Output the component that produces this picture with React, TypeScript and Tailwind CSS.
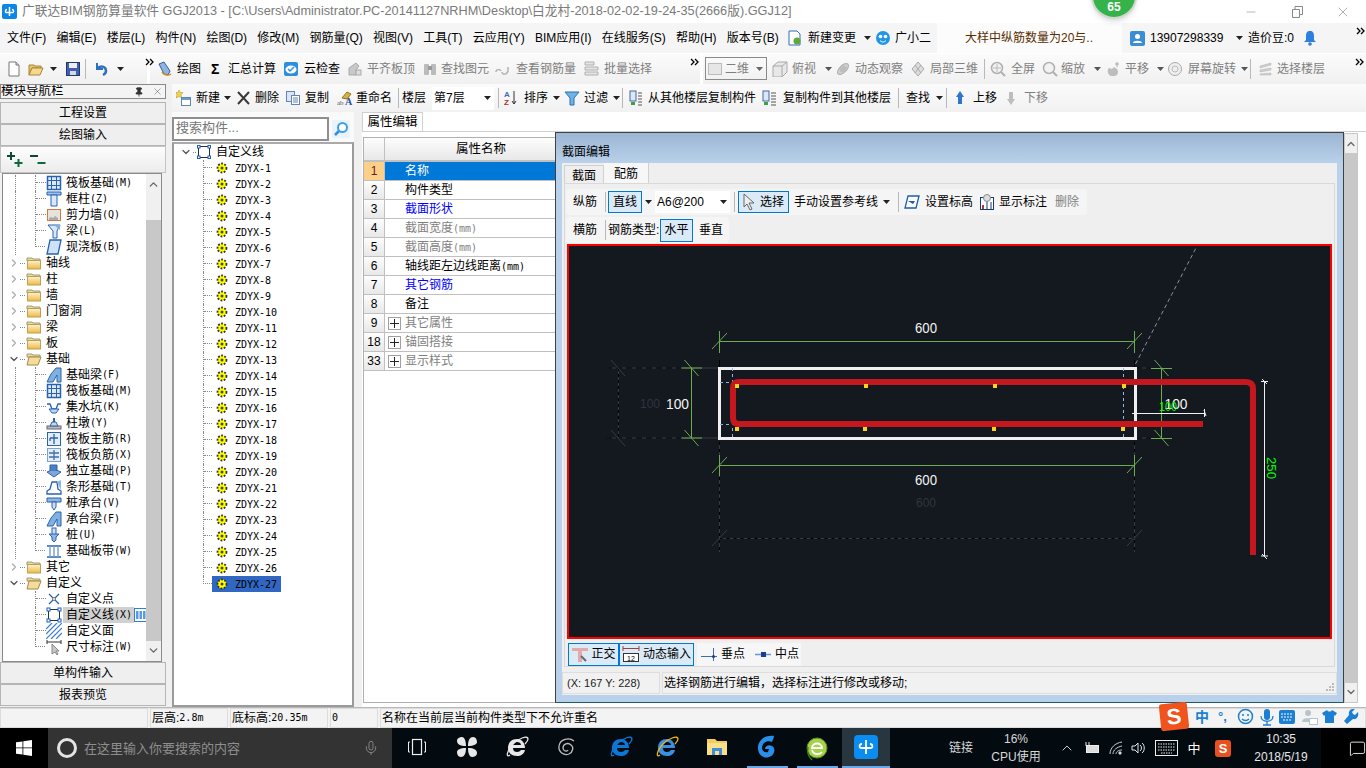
import React from "react";
import { Mic, ChevronUp, ChevronDown, ChevronRight, Pin, X as XIcon, Minus, MessageSquare } from "lucide-react";

const S = ({ w = 16, h = 16, children }: { w?: number; h?: number; children?: React.ReactNode }) => (
  <svg width={w} height={h} viewBox={`0 0 ${w} ${h}`} className="shrink-0">{children}</svg>
);

const Dd = ({ c = "#222" }: { c?: string }) => (
  <svg width="7" height="4" viewBox="0 0 7 4" className="shrink-0"><path d="M0 0h7L3.500 4z" fill={c} /></svg>
);
const More = () => (
  <svg width="10" height="8" viewBox="0 0 10 8" className="shrink-0 -translate-y-[7px]"><path d="M1 1l3 3-3 3M5 1l3 3-3 3" fill="none" stroke="#000" strokeWidth="1.300" /></svg>
);
const Sep = ({ cn }: { cn: string }) => (
  <div className={`h-[20px] shrink-0 ${cn}`}><div className="w-px h-full bg-[#b8b8b8]" /></div>
);

const Doc = () => <S><path d="M3 1h7l3 3v11H3z" fill="#fff" stroke="#777" /><path d="M10 1v3h3" fill="#ddd" stroke="#777" /></S>;
const Folder = () => <S><path d="M1 4h5l1 1h6v2H4l-3 7z" fill="#e8c56a" stroke="#a8863a" /><path d="M4 7h11l-3 7H1z" fill="#f6d88a" stroke="#a8863a" /></S>;
const Save = () => <S><rect x="1.500" y="1.500" width="13" height="13" fill="#3f5fb5" stroke="#24386e" /><rect x="4" y="2" width="8" height="5" fill="#eee" /><rect x="5" y="10" width="6" height="4" fill="#d8d8d8" /></S>;
const Undo = () => <S><path d="M3 2v6h6" fill="none" stroke="#2d6fc0" strokeWidth="2" /><path d="M3 8c3-4 9-3 9 2 0 2-1 3-3 4" fill="none" stroke="#2d6fc0" strokeWidth="2.500" /></S>;
const Draw = () => <S><path d="M2 3l5-2 6 9-2 4-4-1z" fill="#8fb4e0" stroke="#33609c" /><path d="M5 11c2 3 6 4 9 2" fill="none" stroke="#c09020" strokeWidth="1.500" /></S>;
const Cloud = () => <S><rect x="1" y="1" width="14" height="14" rx="2" fill="#2b8ee0" /><ellipse cx="8" cy="8.500" rx="5.500" ry="4" fill="#fff" /><path d="M5 8l2 2 4-4" fill="none" stroke="#2b8ee0" strokeWidth="1.500" /></S>;
const GrayA = () => <S><path d="M2 14V7l7-5 3 3-3 4v5z" fill="#c8c8c8" stroke="#aaa" /><rect x="9" y="9" width="5" height="5" fill="#ddd" stroke="#aaa" /></S>;
const Bino = () => <S><rect x="2" y="3" width="5" height="11" rx="1" fill="#bbb" /><rect x="9" y="3" width="5" height="11" rx="1" fill="#bbb" /><rect x="6" y="5" width="4" height="4" fill="#999" /></S>;
const Rebar = () => <S><path d="M1 11c0-3 4-3 5-1M7 11c0 3 5 3 6-1V6" fill="none" stroke="#b4b4b4" strokeWidth="1.500" /></S>;
const Batch = () => <S><path d="M1 1h9v3H1zM1 6h13v3H1zM1 11h13v3H1z" fill="#e4e4e4" stroke="#b0b0b0" /></S>;
const Cube = () => <S w={18}><path d="M2 5l5-4h9v10l-5 5H2z" fill="#e8e8e8" stroke="#aaa" /><path d="M2 5h9v11M11 5l5-4" fill="none" stroke="#aaa" /></S>;
const Orbit = () => <S><ellipse cx="8" cy="8" rx="7" ry="3.500" transform="rotate(-45 8 8)" fill="#cfcfcf" stroke="#b0b0b0" /><circle cx="8" cy="8" r="3.500" fill="#bdbdbd" /></S>;
const Local3 = () => <S><path d="M8 1l6 7-6 7-6-7z" fill="#ddd" stroke="#aaa" /><path d="M5 4l6 8M11 4l-6 8" stroke="#aaa" /></S>;
const ZoomG = ({ plus = true }: { plus?: boolean }) => <S><circle cx="7" cy="7" r="5.500" fill="#f2f2f2" stroke="#b0b0b0" strokeWidth="1.500" /><path d="M11 11l4 4" stroke="#b0b0b0" strokeWidth="2" />{plus && <path d="M7 3v8M3 7h8" stroke="#bbb" />}</S>;
const Pan = () => <S><path d="M6 15c-4-2-4-6-2-8l3 1 2-2 3 2c2 3 1 6-2 7z" fill="#bdbdbd" /><path d="M12 1v5M10 3h4" stroke="#aaa" /></S>;
const Rot = () => <S><circle cx="8" cy="8" r="6.500" fill="#eee" stroke="#aaa" /><circle cx="8" cy="8" r="3" fill="none" stroke="#bbb" /></S>;
const Layers = () => <S><path d="M2 5l11-3v2L2 7zM2 9l11-2v2L2 11zM2 13l11-1v2H2z" fill="#cfcfcf" stroke="#b0b0b0" strokeWidth=".5" /></S>;

const NewA = () => <S><path d="M3 0l1.500 2.500H7L5 5l1 3-3-1.500L0 8l1-3-1-2.500h2z" fill="#f3d24a" stroke="#b0902a" strokeWidth=".5" /><rect x="5.500" y="7.500" width="9" height="8" fill="#fff" stroke="#5b86b8" /><rect x="6" y="8" width="8" height="2" fill="#6c9bd0" /></S>;
const Del = () => <S><path d="M2 2l11 12M13 2L2 14" stroke="#3a3a3a" strokeWidth="2" /></S>;
const Cp = () => <S><rect x="1.500" y="1.500" width="8" height="10" fill="#dbe7f6" stroke="#6185b5" /><rect x="6.500" y="5.500" width="8" height="9" fill="#fff" stroke="#6185b5" /><path d="M8 8h5M8 10h5M8 12h5" stroke="#6185b5" /></S>;
const Ren = () => <S><path d="M5 8l5-6 4 2-4 5z" fill="#d9b13f" stroke="#8c7225" /><text x="0" y="15" fontSize="7" fill="#555" fontFamily="Liberation Serif">ab</text><text x="8" y="15" fontSize="10" fontWeight="700" fill="#2a4f9c" fontFamily="Liberation Serif">A</text></S>;
const Sort = () => <S w={13}><text x="0" y="7" fontSize="8" fontWeight="700" fill="#3b6fb8" fontFamily="Liberation Sans">A</text><text x="0" y="15" fontSize="8" fontWeight="700" fill="#b03030" fontFamily="Liberation Sans">Z</text><path d="M10 1v13M8 11l2 3 2-3" fill="none" stroke="#333" /></S>;
const Filter = () => <S><path d="M1 2h14L10 8v7H6V8z" fill="#6fb2e6" stroke="#2d6fb0" /></S>;
const CopyF = () => <S w={13}><rect x="1" y="1" width="6" height="10" fill="#dbe7f6" stroke="#4469a0" /><path d="M9 3h4M9 6h4M9 9h4M9 12h4M9 15h4" stroke="#555" /><path d="M2 12h4v3H2z" fill="#3aa04a" /></S>;
const Up = () => <S w={10}><path d="M5 1l4 6H7v7H3V7H1z" fill="#2f75c9" /></S>;
const Down = () => <S w={10}><path d="M5 15l4-6H7V2H3v7H1z" fill="#bdbdbd" /></S>;

const Tool = ({ i, t, cn, dis, g = "gap-[4px]" }: { i?: React.ReactNode; t: string; cn: string; dis?: boolean; g?: string }) => (
  <div className={`flex items-center shrink-0 whitespace-nowrap ${g} ${cn} ${dis ? "text-[#7f7f7f]" : "text-black"}`}>
    {i}
    <span>{t}</span>
  </div>
);
const DdBox = ({ cn, c }: { cn: string; c?: string }) => <div className={`flex items-center shrink-0 ${cn}`}><Dd c={c} /></div>;

const menus = ["文件(F)", "编辑(E)", "楼层(L)", "构件(N)", "绘图(D)", "修改(M)", "钢筋量(Q)", "视图(V)", "工具(T)", "云应用(Y)", "BIM应用(I)", "在线服务(S)", "帮助(H)", "版本号(B)"];

const Blue = "#2a62b0";
const treeIcons: Record<string, React.ReactNode> = {
  grid: <S><rect x="1.500" y="1.500" width="13" height="13" fill="#dce9f8" stroke={Blue} strokeWidth="1.500" /><path d="M5.500 1v14M10.500 1v14M1 5.500h14M1 10.500h14" stroke={Blue} /></S>,
  col: <S><path d="M1 1h14v3H1z" fill="#9cc4ec" stroke={Blue} /><path d="M5 4h6v11H5z" fill="#d9e9f9" stroke={Blue} /></S>,
  wall: <S><rect x="1.500" y="2.500" width="13" height="11" fill="#e7e2dc" stroke="#d07a40" /><path d="M3 11l2-1 2 1 2-2 3 2v2H3z" fill="#aaa" /></S>,
  beam: <S><path d="M2 2h12l-3 6v7H7V8z" fill="#d9e9f9" stroke={Blue} /><path d="M8 2l6 5V2z" fill="#7fb0e0" /></S>,
  slab: <S><path d="M4 1h11l-3 14H1z" fill="#cfe3f8" stroke={Blue} strokeWidth="1.300" /></S>,
  fbeam: <S><path d="M1 15l4-8 5-6h5v14h-4V8l-4 7z" fill="#7fb0e0" stroke={Blue} /></S>,
  pit: <S><path d="M1 5h3l2 5h4l2-5h3" fill="none" stroke={Blue} strokeWidth="1.300" /><path d="M3 10l3 4h4l3-4z" fill="#bcd6f0" stroke={Blue} /></S>,
  dun: <S><rect x="1" y="11" width="14" height="3" fill="#bbb" stroke="#667" /><path d="M4 11l2-4h4l2 4z" fill="#c8d4e4" stroke={Blue} /><rect x="7" y="3" width="2" height="4" fill={Blue} /></S>,
  main: <S><rect x="1.500" y="1.500" width="13" height="13" fill="#e3eefa" stroke={Blue} /><path d="M8 3v10M4 7h8M4 7v3" fill="none" stroke={Blue} strokeWidth="1.300" /></S>,
  neg: <S><rect x="1.500" y="1.500" width="13" height="13" fill="#e3eefa" stroke="#7aa3d0" /><path d="M3 6h10M3 10h10M8 3v10" stroke="#446ea8" strokeWidth="1.300" /></S>,
  iso: <S><path d="M1 9l7-3 7 3-7 5z" fill="#7ea7d8" stroke={Blue} /><path d="M4 8V2h7v6" fill="#4d7fbe" stroke={Blue} /></S>,
  strip: <S><path d="M1 15v-3l3-2 2-7h5l1 7 3 2v3z" fill="#fff" stroke={Blue} strokeWidth="1.300" /><path d="M11 3l4-2v10z" fill="#8db7e2" /></S>,
  cap: <S><path d="M1 3h14v4H1z" fill="#8db7e2" stroke={Blue} /><path d="M6 7h4v5l-2 3-2-3z" fill="#cfe0f4" stroke={Blue} /></S>,
  pile: <S><rect x="6" y="1" width="4" height="8" fill="#cfe0f4" stroke={Blue} /><path d="M3 7h10l-3 3v3l-2 2-2-2v-3z" fill="#8db7e2" stroke={Blue} /></S>,
  band: <S><path d="M1 3h14M1 14h14" stroke={Blue} strokeWidth="1.500" /><path d="M4 3v11M8 3v11M12 3v11" stroke="#7aa3d0" strokeWidth="1.500" /></S>,
  pt: <S><path d="M3 3l10 10M13 3L3 13" stroke={Blue} strokeWidth="1.300" /><circle cx="8" cy="8" r="1.500" fill="#fff" stroke="#777" /></S>,
  line: <S><rect x="2.500" y="2.500" width="11" height="11" fill="none" stroke="#234" /><g fill="#fff" stroke="#1f5fc0"><rect x="1" y="1" width="3" height="3" /><rect x="12" y="1" width="3" height="3" /><rect x="1" y="12" width="3" height="3" /><rect x="12" y="12" width="3" height="3" /></g></S>,
  hatch: <S><path d="M0 6l6-6M0 11L11 0M0 16L16 0M5 16L16 5M10 16l6-6" stroke="#3a7ad0" strokeWidth="1.200" /></S>,
  dim: <S><path d="M1 1v4M15 1v4M1 3h14" stroke="#333" /><path d="M6 5v10l3-2 2 3 1-1-2-3h3z" fill="#c8c8c8" stroke="#888" /></S>,
};

const FolderT = ({ open }: { open?: boolean }) => (
  <S>
    <path d="M1 3h5l1 1h7v2H1z" fill="#e6d9a8" stroke="#a89a70" />
    {open ? <path d="M3 6h12l-3 8H1z" fill="#f5dd99" stroke="#a38a45" /> : <rect x="1.500" y="5.500" width="13" height="8.500" fill="url(#fg)" stroke="#b9a060" />}
  </S>
);

type Row = { l: 1 | 2; t: string; s?: string; i?: string; open?: boolean; closed?: boolean; outer?: boolean; sel?: boolean; last?: boolean };
const rows: Row[] = [
  { l: 2, outer: true, t: "筏板基础", s: "(M)", i: "grid" },
  { l: 2, outer: true, t: "框柱", s: "(Z)", i: "col" },
  { l: 2, outer: true, t: "剪力墙", s: "(Q)", i: "wall" },
  { l: 2, outer: true, t: "梁", s: "(L)", i: "beam" },
  { l: 2, outer: true, t: "现浇板", s: "(B)", i: "slab", last: true },
  { l: 1, t: "轴线", closed: true },
  { l: 1, t: "柱", closed: true },
  { l: 1, t: "墙", closed: true },
  { l: 1, t: "门窗洞", closed: true },
  { l: 1, t: "梁", closed: true },
  { l: 1, t: "板", closed: true },
  { l: 1, t: "基础", open: true },
  { l: 2, outer: true, t: "基础梁", s: "(F)", i: "fbeam" },
  { l: 2, outer: true, t: "筏板基础", s: "(M)", i: "grid" },
  { l: 2, outer: true, t: "集水坑", s: "(K)", i: "pit" },
  { l: 2, outer: true, t: "柱墩", s: "(Y)", i: "dun" },
  { l: 2, outer: true, t: "筏板主筋", s: "(R)", i: "main" },
  { l: 2, outer: true, t: "筏板负筋", s: "(X)", i: "neg" },
  { l: 2, outer: true, t: "独立基础", s: "(P)", i: "iso" },
  { l: 2, outer: true, t: "条形基础", s: "(T)", i: "strip" },
  { l: 2, outer: true, t: "桩承台", s: "(V)", i: "cap" },
  { l: 2, outer: true, t: "承台梁", s: "(F)", i: "fbeam" },
  { l: 2, outer: true, t: "桩", s: "(U)", i: "pile" },
  { l: 2, outer: true, t: "基础板带", s: "(W)", i: "band", last: true },
  { l: 1, t: "其它", closed: true },
  { l: 1, t: "自定义", open: true },
  { l: 2, t: "自定义点", i: "pt" },
  { l: 2, t: "自定义线", s: "(X)", i: "line", sel: true },
  { l: 2, t: "自定义面", i: "hatch" },
  { l: 2, t: "尺寸标注", s: "(W)", i: "dim", last: true },
];

const Mono = ({ t }: { t: string }) => <span className="font-['DejaVu_Sans_Mono',monospace] text-[10px]">{t}</span>;

const NavRow = ({ r }: { r: Row }) => {
  if (r.l === 1) {
    return (
      <div className="flex items-center h-4 shrink-0 pl-[5px]">
        <div className="w-[12px] flex justify-center shrink-0">
          {r.open ? <ChevronDown size={12} color="#555" strokeWidth={2.500} /> : <ChevronRight size={12} color="#aaa" strokeWidth={2.500} />}
        </div>
        <div className="w-[5px] border-b border-dotted border-[#888] shrink-0 mr-[1px]" />
        <FolderT open={r.open} />
        <span className="ml-[4px]">{r.t}</span>
      </div>
    );
  }
  return (
    <div className="flex h-4 shrink-0 items-center">
      <div className="w-[12px] shrink-0" />
      <div className={`w-px h-full shrink-0 ${r.outer ? "border-l border-dotted border-[#888]" : ""}`} />
      <div className="w-[19px] shrink-0" />
      <div className={`w-[10px] shrink-0 border-l border-dotted border-[#888] ${r.last ? "h-1/2 self-start border-b" : "h-full"}`}>
        {!r.last && <div className="w-[10px] mt-[7px] border-b border-dotted border-[#888]" />}
      </div>
      <div className="w-[1px] shrink-0" />
      {treeIcons[r.i!]}
      <div className={`ml-[1px] pl-[3px] pr-[2px] h-full flex items-center whitespace-nowrap shrink-0 ${r.sel ? "bg-[#d0d0d0]" : ""}`}>
        {r.t}{r.s && <Mono t={r.s} />}
      </div>
      {r.sel && (
        <svg width="13" height="14" viewBox="0 0 13 14" className="shrink-0"><rect x=".5" y=".5" width="12" height="13" fill="#fff" stroke="#2b7fd8" /><path d="M2 3h2.500v8H2zM5.500 3H8v8H5.500zM9 3h2.500v8H9z" fill="#5a9ae0" /></svg>
      )}
    </div>
  );
};

const Gear = () => (
  <S w={12} h={12}>
    <circle cx="6" cy="6" r="4.500" fill="#ffff00" stroke="#333" strokeWidth="1.800" strokeDasharray="1.800 1.500" />
    <circle cx="6" cy="6" r="1.500" fill="#444" />
  </S>
);

const props = [
  { n: "1", t: "名称", c: "text-white", act: true },
  { n: "2", t: "构件类型", c: "text-black" },
  { n: "3", t: "截面形状", c: "text-[#0000ff]" },
  { n: "4", t: "截面宽度", s: "(mm)", c: "text-[#7f7f7f]" },
  { n: "5", t: "截面高度", s: "(mm)", c: "text-[#7f7f7f]" },
  { n: "6", t: "轴线距左边线距离", s: "(mm)", c: "text-black" },
  { n: "7", t: "其它钢筋", c: "text-[#0000ff]" },
  { n: "8", t: "备注", c: "text-black" },
  { n: "9", t: "其它属性", c: "text-[#7f7f7f]", plus: true },
  { n: "18", t: "锚固搭接", c: "text-[#7f7f7f]", plus: true },
  { n: "33", t: "显示样式", c: "text-[#7f7f7f]", plus: true },
];

const Tick = ({ x, y, c }: { x: number; y: number; c: string }) => (
  <path d={`M${x - 7.500} ${y + 8}L${x + 7.500} ${y - 8}`} stroke={c} fill="none" />
);
const TickB = ({ x, y, c }: { x: number; y: number; c: string }) => (
  <path d={`M${x - 7} ${y - 8}L${x + 7} ${y + 8}`} stroke={c} fill="none" />
);

const Num = ({ x, y, t, c, w = 22, fs = 15 }: { x: number; y: number; t: string; c: string; w?: number; fs?: number }) => (
  <text x={x} y={y} textAnchor="middle" fill={c} fontSize={fs} fontFamily="Liberation Sans" textLength={w} lengthAdjust="spacingAndGlyphs">{t}</text>
);

const Drawing = () => {
  const g = "#6dab52";
  const d = "#343b47";
  return (
    <svg width="761" height="391" viewBox="569 246 761 391" className="block">
      <path d="M606 368H719M606 438H719M1135 368H1150M1135 438H1150" stroke={d} />
      <path d="M606 368H681M606 438H681M1136 368H1150M1136 438H1150" stroke="#000" strokeDasharray="6 4" />
      <path d="M618.500 368V438" stroke={d} />
      <path d="M618.500 368V438" stroke="#000" strokeDasharray="3 3" />
      <TickB x={618} y={368} c={d} />
      <TickB x={618} y={438} c={d} />
      <path d="M719.500 442V552M1134.500 442V552M719.500 538.500H1134.500" stroke={d} />
      <path d="M719.500 442V552M1134.500 442V552M719.500 538.500H1134.500" stroke="#000" strokeDasharray="3 4" />
      <Tick x={719.500} y={538} c={d} />
      <Tick x={1134.500} y={538} c={d} />
      <path d="M719.500 360V367M1134.500 360V367" stroke="#000" />
      <path d="M1135.500 364L1197 246" stroke="#8a8f98" strokeDasharray="4 3" fill="none" />
      <path d="M719.500 341.500H1134.500M719.500 331V353M1134.500 331V353" stroke={g} />
      <Tick x={719.500} y={341} c={g} />
      <Tick x={1134.500} y={341} c={g} />
      <path d="M719.500 465.500H1134.500M719.500 455V476M1134.500 455V476" stroke={g} />
      <Tick x={719.500} y={465} c={g} />
      <Tick x={1134.500} y={465} c={g} />
      <path d="M681.500 368H702M681.500 438H702M691.500 368V438" stroke={g} />
      <TickB x={691.500} y={368} c={g} />
      <TickB x={691.500} y={438} c={g} />
      <path d="M1151 368.500H1172M1151 438.500H1172M1161.500 368V438" stroke={g} />
      <TickB x={1161.500} y={368} c={g} />
      <TickB x={1161.500} y={438} c={g} />
      <rect x="719.500" y="368.500" width="416" height="70" fill="none" stroke="#f0f0f0" strokeWidth="3" />
      <path d="M732.500 368V438M1123.500 368V438M720 382.500H733M720 424.500H733" stroke="#8fb8e4" strokeDasharray="3 3" />
      <path d="M1203 424H739Q733 424 733 418V388Q733 382 739 382H1246Q1253 382 1253 389V555" fill="none" stroke="#c4181e" strokeWidth="6" />
      <g fill="#ffd21f">
        <rect x="735" y="384" width="4" height="4" />
        <rect x="864" y="384" width="4" height="4" />
        <rect x="993" y="384" width="4" height="4" />
        <rect x="1122" y="384" width="4" height="4" />
        <rect x="735" y="427" width="4" height="4" />
        <rect x="863" y="427" width="4" height="4" />
        <rect x="992" y="427" width="4" height="4" />
        <rect x="1121" y="427" width="4" height="4" />
      </g>
      <path d="M1132 413.500H1205M1204 410L1206 416M1204.500 409V417" stroke="#f0f0f0" fill="none" />
      <path d="M1264.500 381.500V556M1261 381.500H1268M1261 556H1268M1262 379L1267 384M1262 554L1267 559" stroke="#f0f0f0" fill="none" />
      <Num x={926} y={333} t="600" c="#f5f5f5" />
      <Num x={926} y={485} t="600" c="#f5f5f5" />
      <Num x={926} y={507} t="600" c="#2f3540" w={20} fs={13} />
      <Num x={677.500} y={409} t="100" c="#f5f5f5" w={23} />
      <Num x={650} y={408} t="100" c="#2f3540" w={20} fs={13} />
      <Num x={1176} y={409} t="100" c="#f5f5f5" w={23} />
      <Num x={1168} y={411} t="100" c="#00ff00" w={18} fs={12} />
      <text x="1266" y="468" transform="rotate(90 1266 468)" textAnchor="middle" fill="#00ff00" fontSize="12" fontFamily="Liberation Sans" textLength="22" lengthAdjust="spacingAndGlyphs" dy="-1">250</text>
    </svg>
  );
};

const Btn = ({ cn, children }: { cn: string; children: React.ReactNode }) => (
  <div className={`flex items-center justify-center shrink-0 border border-[#0078d7] bg-[#dbeaf7] ${cn}`}>{children}</div>
);

const Dialog = () => (
  <div className="absolute left-[555px] top-[132px] w-[789px] h-[571px] border border-[#404040] border-b-[#1c5f6a] flex flex-col bg-[#b9d1ea] z-10">
    <div className="h-[30px] shrink-0 pl-[6px] pt-[12px] leading-[14px] text-black bg-gradient-to-b from-[#9bb5d3] to-[#b9d1ea]">截面编辑</div>
    <div className="mx-[6px] h-[532px] bg-[#efefef] flex flex-col shrink-0">
      <div className="h-[20px] shrink-0 flex items-end pl-[2px]">
        <div className="w-[40px] h-[18px] border border-b-0 border-[#d0d0d0] flex items-center justify-center pt-[2px]">截面</div>
        <div className="w-[45px] h-[20px] bg-[#f7f7f7] border-r border-[#d0d0d0] flex items-center justify-center pt-[2px]">配筋</div>
      </div>
      <div className="mx-[2px] h-[484px] border border-[#d9d9d9] flex flex-col shrink-0">
        <div className="h-[5px] shrink-0" />
        <div className="h-[26px] w-[521px] ml-[1px] shrink-0 flex items-center bg-[#f5f5f5] rounded-sm">
          <Tool t="纵筋" cn="ml-[7px] w-[32px]" />
          <Sep cn="w-[3px]" />
          <Btn cn="w-[34px] h-[22px]">直线</Btn>
          <DdBox cn="w-[13px] justify-center" />
          <div className="w-[75px] h-[22px] bg-white flex items-center justify-between shrink-0 pl-[2px] pr-[3px] text-[12px]"><span>A6@200</span><Dd /></div>
          <Sep cn="w-[4px] ml-[4px]" />
          <Btn cn="w-[51px] h-[22px] gap-[5px]">
            <svg width="12" height="18" viewBox="0 0 12 18"><path d="M1 1v13l3-3 3 6 2-1-3-6h5z" fill="#eee" stroke="#666" /></svg>
            <span>选择</span>
          </Btn>
          <Tool t="手动设置参考线" cn="ml-[5px] w-[89px]" />
          <DdBox cn="w-[15px]" />
          <Sep cn="w-[6px]" />
          <Tool cn="w-[76px]" g="gap-[5px]" t="设置标高" i={<S><path d="M4 2h11l-3 12H1z" fill="#fff" stroke="#1c5fa8" strokeWidth="1.300" /><path d="M4 7h7l-2 3z" fill="#1c5fa8" /></S>} />
          <Tool cn="w-[75px]" g="gap-[5px]" t="显示标注" i={<S w={14}><rect x=".5" y="3.500" width="13" height="12" fill="#fff" stroke="#163d72" /><circle cx="7" cy="4" r="3.500" fill="#ddd" stroke="#888" /><rect x="2" y="11" width="2" height="4" fill="#c03030" /><path d="M7 8v7M11 8v7" stroke="#163d72" /></S>} />
          <Tool t="删除" cn="" dis />
        </div>
        <div className="h-[2px] shrink-0" />
        <div className="h-[26px] w-[163px] ml-[1px] shrink-0 flex items-center bg-[#f5f5f5] rounded-sm">
          <Tool t="横筋" cn="ml-[7px] w-[32px]" />
          <Sep cn="w-[3px]" />
          <Tool t="钢筋类型:" cn="w-[52px]" />
          <Btn cn="w-[33px] h-[23px]">水平</Btn>
          <Tool t="垂直" cn="ml-[6px]" />
        </div>
        <div className="h-px shrink-0" />
        <div className="ml-[2px] w-[765px] h-[395px] border-2 border-[#ff0000] bg-[#14181f] shrink-0 overflow-hidden">
          <Drawing />
        </div>
        <div className="h-[3px] shrink-0" />
        <div className="h-[24px] shrink-0 flex items-center ml-[3px]">
          <Btn cn="w-[51px] h-[23px] gap-[2px]">
            <S w={18} h={18}><path d="M1 3h16v3h-6v11H7V6H1z" fill="#e4a9a9" /><path d="M10 11l5 5" stroke="#667" strokeWidth="2" /></S>
            <span>正交</span>
          </Btn>
          <Btn cn="w-[75px] h-[23px] gap-[3px]">
            <S w={18} h={18}><path d="M1 1v5M17 1v5M1 3.500h16" stroke="#a04040" /><rect x="1.500" y="8.500" width="15" height="8" fill="#fff" stroke="#333" /><text x="5" y="15.500" fontSize="7" fontFamily="Liberation Sans">12</text></S>
            <span>动态输入</span>
          </Btn>
          <div className="ml-[3px] w-[104px] h-[23px] bg-[#f6f6f6] flex items-center shrink-0 pl-[4px]">
            <Tool cn="w-[54px]" g="gap-[3px]" t="垂点" i={<S w={17}><path d="M0 10.500h16M12.500 2v13" stroke="#3a6fb5" /><circle cx="12.500" cy="10.500" r="1.500" fill="#1c3d7a" /></S>} />
            <Tool cn="" g="gap-[3px]" t="中点" i={<S w={17}><path d="M0 8.500h16" stroke="#6a94cc" strokeWidth="1.500" /><rect x="6" y="6" width="5" height="5" fill="#1c3d90" /></S>} />
          </div>
        </div>
      </div>
      <div className="h-[5px] shrink-0" />
      <div className="h-[22px] shrink-0 flex gap-[2px]">
        <div className="w-[98px] bg-[#f1f1f1] border border-[#dedede] flex items-center pl-[4px] text-[11px] text-[#222]">(X: 167 Y: 228)</div>
        <div className="flex-1 bg-[#f1f1f1] border border-[#dedede] flex items-center pl-[1px] relative">
          选择钢筋进行编辑，选择标注进行修改或移动;
          <svg width="10" height="10" viewBox="0 0 10 10" className="absolute right-[1px] bottom-[1px]"><g fill="#bbb"><rect x="7" y="1" width="2" height="2" /><rect x="4" y="4" width="2" height="2" /><rect x="7" y="4" width="2" height="2" /><rect x="1" y="7" width="2" height="2" /><rect x="4" y="7" width="2" height="2" /><rect x="7" y="7" width="2" height="2" /></g></svg>
        </div>
      </div>
    </div>
  </div>
);

const TaskSlot = ({ cn, children, line }: { cn: string; children: React.ReactNode; line?: boolean }) => (
  <div className={`h-full flex flex-col items-center justify-between shrink-0 ${cn}`}>
    <div className="flex-1 flex items-center justify-center">{children}</div>
    <div className={`h-[2px] w-[41px] ${line ? "bg-[#6aa7e8]" : ""}`} />
  </div>
);

const Ie = ({ c = "#e8e8e8", ring = "#e8e8e8" }: { c?: string; ring?: string }) => (
  <svg width="24" height="24" viewBox="0 0 24 24">
    <path d="M3 13c0-6 4-9 9-9s8 4 8 9H8c0 3 2 4 4 4 2 0 3-1 4-2h4c-1 4-4 6-8 6-5 0-9-3-9-8zM8 10h8c0-2-2-3-4-3s-4 1-4 3z" fill={c} />
    <path d="M5 20C1 23 1 17 8 9c6-6 15-9 15-5 0 2-2 4-3 5" fill="none" stroke={ring} strokeWidth="1.300" />
  </svg>
);

export default function App() {
  return (
    <div className="relative w-[1366px] h-[768px] overflow-hidden flex flex-col bg-[#f5f5f5] text-[12px] leading-none text-black font-['Liberation_Sans','Noto_Sans_CJK_SC',sans-serif]">
      <svg width="0" height="0" className="absolute"><defs><linearGradient id="fg" x1="0" y1="0" x2="0" y2="1"><stop offset="0" stopColor="#fdf3cf" /><stop offset="1" stopColor="#eeb93e" /></linearGradient></defs></svg>

      <div className="h-[23px] shrink-0 bg-white flex items-center text-[#7a7a7a] relative">
        <div className="ml-[2px] w-[15px] h-[15px] rounded-[2px] bg-[#0b86e6] flex items-center justify-center shrink-0">
          <svg width="11" height="11" viewBox="0 0 11 11"><path d="M5.500 1v9M1.500 6.500h8M3 3.500c-2 0-2 3-.5 3M8 3.500c2 0 2 3 .5 3" fill="none" stroke="#fff" strokeWidth="1.500" /></svg>
        </div>
        <span className="ml-[5px] text-[12.730px] whitespace-nowrap">广联达BIM钢筋算量软件 GGJ2013 - [C:\Users\Administrator.PC-20141127NRHM\Desktop\白龙村-2018-02-02-19-24-35(2666版).GGJ12]</span>
        <div className="ml-auto flex items-center shrink-0">
          <div className="w-[46px] flex justify-center"><Minus size={14} color="#888" strokeWidth={1} /></div>
          <div className="w-[46px] flex justify-center">
            <svg width="11" height="12" viewBox="0 0 11 12"><path d="M.5 3.500h7v8h-7zM3 3.500V.5h7.500v8H7.500" fill="none" stroke="#888" /></svg>
          </div>
          <div className="w-[46px] flex justify-center"><XIcon size={16} color="#888" strokeWidth={1} /></div>
        </div>
      </div>

      <div className="h-[30px] shrink-0 flex items-center bg-[#f5f5f5]">
        <div className="w-[787px] pl-[7px] flex gap-[10.200px] shrink-0 whitespace-nowrap">
          {menus.map((m) => <span key={m}>{m}</span>)}
        </div>
        <Tool cn="w-[77px]" g="gap-[5px]" t="新建变更" i={<S><path d="M2 1h8l3 3v11H2z" fill="#fff" stroke="#2e6fc0" /><circle cx="10" cy="11" r="3.500" fill="#62a838" /></S>} />
        <DdBox cn="w-[11px]" />
        <Tool cn="w-[62px]" g="gap-[4px]" t="广小二" i={
          <S><ellipse cx="8" cy="8" rx="7" ry="7" fill="#2196e8" /><circle cx="5.500" cy="6.500" r="1.800" fill="#fff" /><circle cx="10.500" cy="6.500" r="1.800" fill="#fff" /><path d="M5 10.500c2 2 4 2 6 0" fill="none" stroke="#fff" /></S>
        } />
        <div className="w-[185px] h-full bg-[#fcfcfc] flex items-center pl-[28px] text-[#5a2d00] shrink-0 whitespace-nowrap">大样中纵筋数量为20与..</div>
        <div className="w-[8px] shrink-0" />
        <Tool cn="w-[106px]" g="gap-[5px]" t="13907298339" i={<div className="w-[15px] h-[15px] rounded-[2px] bg-[#3b8ed4] flex items-center justify-center shrink-0"><svg width="11" height="11" viewBox="0 0 11 11"><circle cx="5.500" cy="3.500" r="2.500" fill="#fff" /><path d="M1 10c0-3 9-3 9 0z" fill="#fff" /></svg></div>} />
        <DdBox cn="w-[12px]" />
        <Tool cn="w-[55px]" t="造价豆:0" />
        <S w={14}><path d="M7 1c3 0 4 2 4 5v4l2 2H1l2-2V6c0-3 1-5 4-5z" fill="#2d7fe0" /><circle cx="7" cy="14" r="1.800" fill="#2d7fe0" /></S>
        <div className="ml-[39px] shrink-0 flex"><More /></div>
      </div>

      <div className="h-[31px] shrink-0 flex items-center bg-white">
        <div className="w-[147px] h-[30px] shrink-0 flex items-center pl-[6px] bg-gradient-to-b from-[#fbfbfb] to-[#f0f0f0]">
          <div className="w-[22px] shrink-0"><Doc /></div>
          <div className="w-[22px] shrink-0"><Folder /></div>
          <DdBox cn="w-[15px]" />
          <div className="w-[20px] shrink-0"><Save /></div>
          <Sep cn="w-[9px]" />
          <div className="w-[23px] shrink-0"><Undo /></div>
          <DdBox cn="w-[28px]" />
          <More />
        </div>
        <div className="ml-[3px] w-[550px] h-[30px] shrink-0 flex items-center pl-[7px] bg-gradient-to-b from-[#fbfbfb] to-[#f0f0f0]">
          <Tool cn="w-[54px]" t="绘图" i={<Draw />} />
          <Tool cn="w-[72px]" g="gap-[5px]" t="汇总计算" i={<span className="font-bold text-[14px] w-[12px]">Σ</span>} />
          <Tool cn="w-[64px]" g="gap-[5px]" t="云检查" i={<Cloud />} />
          <Tool cn="w-[75px]" dis t="平齐板顶" i={<GrayA />} />
          <Tool cn="w-[73px]" g="gap-[3px]" dis t="查找图元" i={<Bino />} />
          <Tool cn="w-[89px]" g="gap-[5px]" dis t="查看钢筋量" i={<Rebar />} />
          <Tool cn="w-[106px]" g="gap-[4px]" dis t="批量选择" i={<Batch />} />
          <More />
        </div>
        <div className="ml-[3px] flex-1 h-[30px] flex items-center pl-[2px] bg-gradient-to-b from-[#fbfbfb] to-[#f0f0f0]">
          <div className="w-[62px] h-[23px] border border-[#8a8a8a] shrink-0 flex items-center pl-[2px] gap-[3px] text-[#7f7f7f]">
            <div className="w-[14px] h-[12px] bg-[#e6e6e6] border border-[#bbb]" />
            <span>二维</span>
            <div className="ml-auto mr-[3px]"><Dd c="#666" /></div>
          </div>
          <Tool cn="ml-[4px] w-[54px]" g="gap-[3px]" dis t="俯视" i={<Cube />} />
          <DdBox cn="w-[10px]" c="#555" />
          <Tool cn="w-[75px]" dis t="动态观察" i={<Orbit />} />
          <Tool cn="w-[74px]" dis t="局部三维" i={<Local3 />} />
          <Sep cn="w-[6px]" />
          <Tool cn="w-[52px]" g="gap-[5px]" dis t="全屏" i={<ZoomG />} />
          <Tool cn="w-[52px]" g="gap-[3px]" dis t="缩放" i={<ZoomG plus={false} />} />
          <DdBox cn="w-[11px]" c="#555" />
          <Tool cn="w-[52px]" dis t="平移" i={<Pan />} />
          <DdBox cn="w-[10px]" c="#555" />
          <Tool cn="w-[74px]" g="gap-[5px]" dis t="屏幕旋转" i={<Rot />} />
          <DdBox cn="w-[9px]" c="#555" />
          <Sep cn="w-[8px]" />
          <Tool cn="w-[97px]" dis g="gap-[3px]" t="选择楼层" i={<Layers />} />
          <More />
        </div>
      </div>

      <div className="h-[623px] shrink-0 flex bg-[#f0f0f0]">
        <div className="w-[166px] shrink-0 flex flex-col">
          <div className="h-[15px] shrink-0 border border-[#8a8a8a] flex items-center bg-[#f4f4f4] overflow-hidden">
            <span className="text-[12.500px] whitespace-nowrap">模块导航栏</span>
            <Pin size={10} className="ml-auto mr-[8px]" color="#333" fill="#333" />
            <XIcon size={11} className="mr-[2px]" color="#444" strokeWidth={1} />
          </div>
          <div className="h-[3px] shrink-0" />
          <div className="h-[22px] shrink-0 border border-[#b5b5b5] bg-[#efefef] flex items-center justify-center">工程设置</div>
          <div className="h-[22px] shrink-0 border border-[#b5b5b5] bg-[#efefef] flex items-center justify-center">绘图输入</div>
          <div className="h-[27px] shrink-0 border border-[#c4c4c4] bg-gradient-to-b from-[#fdfdfd] to-[#ececec] flex items-center pl-[6px] gap-[7px]">
            <S><path d="M4 0v8M0 4h8" stroke="#0b4a30" strokeWidth="2" /><path d="M11.500 7v8M7.500 11h8" stroke="#0b6a3a" strokeWidth="2" /></S>
            <S><path d="M0 4h8" stroke="#0b4a30" strokeWidth="2" /><path d="M7.500 11h8" stroke="#0b6a3a" strokeWidth="2" /></S>
          </div>
          <div className="h-[489px] shrink-0 ml-[2px] mr-[4px] border border-[#8a8a8a] bg-white flex overflow-hidden">
            <div className="w-[143px] shrink-0 flex flex-col pt-[1px] overflow-hidden">
              {rows.map((r, i) => <NavRow key={i} r={r} />)}
            </div>
            <div className="w-[15px] shrink-0 flex flex-col items-center bg-[#f0f0f0] mr-[1px]">
              <div className="h-[46px] w-full shrink-0 pt-[4px] flex justify-center"><ChevronUp size={13} color="#666" strokeWidth={2.500} /></div>
              <div className="h-[421px] w-full bg-[#c8c8c8] shrink-0" />
              <div className="pt-[3px]"><ChevronDown size={13} color="#666" strokeWidth={2.500} /></div>
            </div>
          </div>
          <div className="h-[22px] shrink-0 border border-[#b5b5b5] bg-[#efefef] flex items-center justify-center">单构件输入</div>
          <div className="h-[22px] shrink-0 border border-[#b5b5b5] bg-[#efefef] flex items-center justify-center">报表预览</div>
        </div>
        <div className="w-[6px] shrink-0" />
        <div className="flex-1 flex flex-col min-w-0">
          <div className="h-[28px] shrink-0 flex items-center pl-[4px] bg-gradient-to-b from-[#fbfbfb] to-[#f1f1f1]">
            <Tool cn="w-[48px]" g="gap-[4px]" t="新建" i={<NewA />} />
            <DdBox cn="w-[12px]" />
            <Tool cn="w-[49px]" g="gap-[3px]" t="删除" i={<Del />} />
            <Tool cn="w-[52px]" g="gap-[4px]" t="复制" i={<Cp />} />
            <Tool cn="w-[61px]" g="gap-[3px]" t="重命名" i={<Ren />} />
            <Sep cn="w-[4px]" />
            <Tool cn="w-[30px]" t="楼层" />
            <div className="w-[62px] h-[23px] bg-white flex items-center justify-between pl-[2px] pr-[3px] shrink-0"><span>第7层</span><Dd /></div>
            <Sep cn="w-[6px] ml-[4px]" />
            <Tool cn="w-[49px]" g="gap-[7px]" t="排序" i={<Sort />} />
            <DdBox cn="w-[11px]" />
            <Tool cn="w-[49px]" g="gap-[4px]" t="过滤" i={<Filter />} />
            <DdBox cn="w-[9px]" />
            <Sep cn="w-[7px]" />
            <Tool cn="w-[133px]" g="gap-[6px]" t="从其他楼层复制构件" i={<CopyF />} />
            <Tool cn="w-[136px]" g="gap-[5px]" t="复制构件到其他楼层" i={<S><rect x="1" y="1" width="6" height="10" fill="#dbe7f6" stroke="#4469a0" /><path d="M9 3h5M9 6h5M9 9h5M9 12h5M9 15h5" stroke="#555" /><path d="M2 12h4v3H2z" fill="#3aa04a" /></S>} />
            <Sep cn="w-[8px]" />
            <Tool cn="w-[30px]" t="查找" />
            <DdBox cn="w-[10px]" />
            <Sep cn="w-[9px]" />
            <Tool cn="w-[51px]" g="gap-[8px]" t="上移" i={<Up />} />
            <Tool cn="" g="gap-[8px]" dis t="下移" i={<Down />} />
          </div>
          <div className="flex-1 flex min-h-0">
            <div className="w-[182px] shrink-0 flex flex-col bg-white">
              <div className="h-[30px] shrink-0 flex items-center bg-[#fafafa] pt-[4px]">
                <div className="w-[157px] h-[24px] border-2 border-[#8f8f8f] flex items-center pl-[2px] pb-[3px] text-[13px] text-[#777] bg-white shrink-0">搜索构件...</div>
                <div className="ml-[3px]">
                  <S w={18} h={18}><rect width="18" height="18" fill="#eaf3fb" /><circle cx="10.500" cy="7.500" r="4.500" fill="#fff" stroke="#3f9ee8" strokeWidth="2" /><path d="M7 11l-4 4" stroke="#2f8ee0" strokeWidth="2.500" /></S>
                </div>
              </div>
              <div className="flex-1 border-2 border-[#9a9a9a] border-t-[#aaa] flex flex-col min-h-0 overflow-hidden">
                <div className="h-4 flex items-center shrink-0 pl-[6px]">
                  <ChevronDown size={12} color="#555" strokeWidth={2.500} />
                  <div className="w-[3px] ml-[1px] border-b border-dotted border-[#888]" />
                  <div className="ml-[1px]">
                    <S w={14} h={14}><rect x="1.500" y="1.500" width="11" height="11" fill="none" stroke="#234" /><g fill="#fff" stroke="#1f5fc0"><rect x=".5" y=".5" width="2.500" height="2.500" /><rect x="11" y=".5" width="2.500" height="2.500" /><rect x=".5" y="11" width="2.500" height="2.500" /><rect x="11" y="11" width="2.500" height="2.500" /></g></S>
                  </div>
                  <span className="ml-[5px]">自定义线</span>
                </div>
                {Array.from({ length: 27 }, (_, i) => (
                  <div key={i} className="h-4 flex items-center shrink-0">
                    <div className="w-[29px] shrink-0" />
                    <div className={`w-[9px] shrink-0 border-l border-dotted border-[#888] ${i === 26 ? "h-1/2 self-start border-b" : "h-full"}`}>
                      {i !== 26 && <div className="mt-[7px] border-b border-dotted border-[#888]" />}
                    </div>
                    <div className={`flex items-center h-full w-[69px] shrink-0 pl-[4px] ${i === 26 ? "bg-[#3067c2]" : ""}`}>
                      <Gear />
                      <span className="ml-[7px]"><Mono t={`ZDYX-${i + 1}`} /></span>
                    </div>
                  </div>
                ))}
              </div>
            </div>
            <div className="w-[8px] shrink-0" />
            <div className="flex-1 flex flex-col bg-white min-w-0">
              <div className="h-[20px] shrink-0 flex items-end border-b border-[#d0d0d0]">
                <div className="w-[61px] h-[19px] border border-b-0 border-[#d0d0d0] flex items-center justify-center bg-white text-[12.500px]">属性编辑</div>
              </div>
              <div className="flex-1 flex min-h-0 bg-white">
                <div className="flex-1 border border-[#b0b0b0] ml-px mt-[5px] mb-[4px] min-w-0 overflow-hidden">
                  <div className="flex h-[24px] border-b-2 border-[#c0c0c0]">
                    <div className="w-[21px] shrink-0 bg-gradient-to-b from-[#fdfdfd] to-[#e8e8e8] border-r border-[#c0c0c0]" />
                    <div className="w-[192px] shrink-0 bg-gradient-to-b from-[#fdfdfd] to-[#e8e8e8] flex items-center justify-center text-[12.500px]">属性名称</div>
                  </div>
                  {props.map((p) => (
                    <div key={p.n} className="flex h-[19px] border-b border-[#c0c0c0] w-[213px]">
                      <div className={`w-[21px] shrink-0 flex items-center justify-center border-r border-[#c0c0c0] ${p.act ? "bg-[#fdd08a] text-[#6a2020]" : "bg-gradient-to-b from-[#fdfdfd] to-[#e8e8e8]"}`}>{p.n}</div>
                      <div className={`flex-1 flex items-center ${p.act ? "bg-[#0078d7]" : "bg-white"} ${p.c}`}>
                        {p.plus ? (
                          <div className="ml-[3px] w-[13px] h-[13px] border border-[#a0a0a0] flex items-center justify-center mr-[4px] shrink-0">
                            <svg width="9" height="9" viewBox="0 0 9 9"><path d="M4.500 0v9M0 4.500h9" stroke="#222" /></svg>
                          </div>
                        ) : (
                          <div className="w-[20px] shrink-0" />
                        )}
                        <span className="whitespace-nowrap">{p.t}{p.s && <Mono t={p.s} />}</span>
                      </div>
                    </div>
                  ))}
                </div>
                <div className="w-[14px] ml-[1px] mr-[8px] mt-px shrink-0 flex flex-col items-center bg-[#f0f0f0] border border-[#c8c8c8] mb-[4px]">
                  <div className="h-[19px] w-full shrink-0 pt-[4px] flex justify-center"><ChevronUp size={12} color="#666" strokeWidth={2.500} /></div>
                  <div className="h-[530px] w-full bg-[#c8c8c8] shrink-0" />
                  <div className="pt-[3px]"><ChevronDown size={12} color="#666" strokeWidth={2.500} /></div>
                </div>
              </div>
            </div>
          </div>
        </div>
      </div>

      <div className="h-px shrink-0 bg-[#b8b8b8]" />
      <div className="h-[20px] shrink-0 flex gap-[2px] bg-[#f3f3f3]">
        <div className="w-[148px] border border-[#dcdcdc]" />
        <div className="w-[78px] border border-[#dcdcdc] flex items-center pl-[1px]">层高:<Mono t="2.8m" /></div>
        <div className="w-[98px] border border-[#dcdcdc] flex items-center pl-[1px]">底标高:<Mono t="20.35m" /></div>
        <div className="w-[48px] border border-[#dcdcdc] flex items-center pl-[1px]"><Mono t="0" /></div>
        <div className="flex-1 border border-[#dcdcdc] flex items-center pl-[1px]">名称在当前层当前构件类型下不允许重名</div>
      </div>

      <div className="h-[40px] shrink-0 flex items-center bg-[#040b10] text-[#e6e6e6]">
        <div className="w-[48px] h-full flex items-center justify-center bg-black shrink-0">
          <svg width="16" height="16" viewBox="0 0 16 16"><path d="M0 2.300L6.500 1.400V7.500H0zM7.300 1.300L16 0V7.500H7.300zM0 8.300H6.500V14.500L0 13.700zM7.300 8.300H16V16L7.300 14.700z" fill="#fff" /></svg>
        </div>
        <div className="w-[344px] h-full bg-[#333333] flex items-center shrink-0 pl-[9px] text-[#8e8e8e] text-[13px]">
          <div className="w-[20px] h-[20px] rounded-full border-[3px] border-[#e4e4e4] shrink-0" />
          <span className="ml-[7px]">在这里输入你要搜索的内容</span>
          <Mic size={16} className="ml-auto mr-[13px]" color="#8e8e8e" strokeWidth={1.300} />
        </div>
        <TaskSlot cn="w-[50px]">
          <svg width="20" height="18" viewBox="0 0 20 18"><rect x="5.500" y="1.500" width="9" height="15" fill="none" stroke="#eee" strokeWidth="1.200" /><path d="M3 4H1.500v10H3M17 4h1.500v10H17" fill="none" stroke="#eee" /></svg>
        </TaskSlot>
        <TaskSlot cn="w-[50px]">
          <svg width="22" height="22" viewBox="0 0 22 22" fill="#e8e8e8"><path d="M10 10C4 10 1 8 1 5s3-4 5-4 4 3 4 9zM12 10c0-6 2-9 5-9s4 3 4 5-3 4-9 4zM12 12c6 0 9 2 9 5s-3 4-5 4-4-3-4-9zM10 12c0 6-2 9-5 9s-4-3-4-5 3-4 9-4z" /></svg>
        </TaskSlot>
        <TaskSlot cn="w-[50px]"><Ie /></TaskSlot>
        <TaskSlot cn="w-[50px]">
          <svg width="20" height="20" viewBox="0 0 20 20" fill="none" stroke="#bdbdbd" strokeWidth="1.300"><path d="M17 4C12 0 3 2 2 9c-1 6 5 10 10 8 4-2 5-7 2-9-3-3-8-1-8 3 0 3 4 4 5 2" /></svg>
        </TaskSlot>
        <TaskSlot cn="w-[50px] pl-[8px]"><Ie c="#0a78d8" ring="#0a78d8" /></TaskSlot>
        <TaskSlot cn="w-[50px]"><Ie c="#3a8fe0" ring="#f2b90f" /></TaskSlot>
        <TaskSlot cn="w-[50px]">
          <svg width="22" height="20" viewBox="0 0 22 20"><path d="M1 2h8l2 2h10v14H1z" fill="#f5cd5e" /><path d="M1 6h20v12H1z" fill="#fbe08a" /><rect x="6" y="11" width="10" height="7" fill="#3f8fd8" /><rect x="9" y="14" width="4" height="4" fill="#fbe08a" /></svg>
        </TaskSlot>
        <TaskSlot cn="w-[50px]" line>
          <svg width="24" height="26" viewBox="0 0 24 26"><path d="M19 2C10 1 3 6 3 14c0 7 6 11 11 9 6-2 7-9 3-11-3-2-7 0-7 3h4l-1 3c-3 1-6-1-6-4 0-5 5-8 10-6 1-3 2-4 2-6z" fill="#2a8fe8" /></svg>
        </TaskSlot>
        <TaskSlot cn="w-[50px]" line>
          <svg width="24" height="28" viewBox="0 0 24 28"><circle cx="12" cy="15" r="10" fill="#a6d14a" stroke="#5a8f20" /><path d="M7 15c0-6 10-6 10 0H7zm0 2c1 5 8 5 10 2" fill="none" stroke="#fff" strokeWidth="1.800" /><path d="M7 27c-4-4-5-9-4-13" fill="none" stroke="#3c7d15" strokeWidth="1.500" /></svg>
        </TaskSlot>
        <div className="w-[48px] h-full bg-[#283640] flex flex-col items-center justify-between shrink-0">
          <div className="flex-1 flex items-center justify-center">
            <div className="w-[24px] h-[24px] rounded-[4px] bg-[#0b8cf0] flex items-center justify-center">
              <svg width="16" height="16" viewBox="0 0 16 16"><path d="M8 1v14M2 9h12M4 5C1 5 1 9 3 9M12 5c3 0 3 4 1 4" fill="none" stroke="#fff" strokeWidth="1.800" /></svg>
            </div>
          </div>
          <div className="h-[2px] w-full bg-[#6aa7e8]" />
        </div>
        <div className="ml-[59px] w-[24px] shrink-0 text-[12px] text-[#d8d8d8]">链接</div>
        <div className="ml-[13px] w-[60px] shrink-0 flex flex-col items-center gap-[6px] text-[12px] text-[#d8d8d8]"><span>16%</span><span>CPU使用</span></div>
        <div className="ml-[10px] w-[22px] shrink-0 flex justify-center"><ChevronUp size={16} color="#eee" strokeWidth={1.300} /></div>
        <div className="w-[26px] shrink-0 flex justify-center">
          <svg width="17" height="14" viewBox="0 0 17 14"><rect x="3.500" y="4.500" width="12" height="7" fill="#ddd" stroke="#eee" /><path d="M3 1v4M6 1v4" stroke="#eee" /></svg>
        </div>
        <div className="w-[24px] shrink-0 flex justify-center">
          <svg width="16" height="14" viewBox="0 0 16 14" fill="none" stroke="#cfcfcf"><path d="M2 13C2 7 7 2 14 1M5 13c0-4 4-7 9-8M8 13c0-2 2-4 6-4" /><circle cx="12" cy="12" r="1.200" fill="#eee" /></svg>
        </div>
        <div className="w-[20px] shrink-0 flex justify-center">
          <svg width="15" height="14" viewBox="0 0 15 14" fill="none" stroke="#e6e6e6"><path d="M1 5h3l3-3v10L4 9H1zM9 4c2 1 2 5 0 6M11 2c3 2 3 8 0 10" /></svg>
        </div>
        <div className="w-[36px] shrink-0 flex justify-center">
          <svg width="23" height="16" viewBox="0 0 23 16" fill="none" stroke="#eee"><rect x=".5" y=".5" width="22" height="15" /><path d="M3 4h17M3 7h17M3 10h17M6 13h11" strokeDasharray="1.500 1" /></svg>
        </div>
        <div className="w-[20px] shrink-0 text-center text-[13px] text-white">中</div>
        <div className="ml-[11px] w-[16px] h-[17px] bg-[#e8511f] rounded-[3px] shrink-0 flex items-center justify-center text-white font-bold text-[13px]">S</div>
        <div className="ml-[10px] w-[80px] shrink-0 flex flex-col items-center gap-[6px] text-[12px] text-[#e6e6e6]"><span>10:35</span><span>2018/5/19</span></div>
        <div className="ml-auto h-full w-[69px] bg-black flex items-center justify-center shrink-0 pl-[4px]"><MessageSquare size={17} color="#eee" strokeWidth={1.300} /></div>
      </div>

      <div className="absolute left-[1091px] top-[-27px] w-[46px] h-[46px] rounded-full bg-[#35b34a] border-2 border-[#cfd8cf] shadow-md flex items-end justify-center pb-[4px] text-white font-bold text-[12px] z-20">65</div>

      <Dialog />

      <div className="absolute left-[1160px] top-[703px] h-[27px] flex items-center z-20">
        <div className="w-[28px] h-[27px] bg-[#f0541e] rounded-[3px] -rotate-6 flex items-center justify-center text-white font-bold text-[22px] shrink-0">S</div>
        <span className="ml-[7px] text-[#1b7fd4] font-bold text-[14px] w-[20px]">中</span>
        <span className="text-[#1b7fd4] font-bold text-[13px] w-[22px] pl-[3px]">°,</span>
        <svg width="17" height="17" viewBox="0 0 17 17" fill="none" stroke="#1b7fd4" strokeWidth="1.500" className="shrink-0"><circle cx="8.500" cy="8.500" r="7" /><path d="M6 6v2M11 6v2M5 11c2 2 5 2 7 0" /></svg>
        <svg width="14" height="18" viewBox="0 0 14 18" className="ml-[6px] shrink-0"><rect x="4" y="1" width="6" height="11" rx="3" fill="#1b7fd4" /><path d="M1 8c0 7 12 7 12 0M7 14v3M3 17h8" fill="none" stroke="#1b7fd4" strokeWidth="1.300" /></svg>
        <svg width="16" height="14" viewBox="0 0 16 14" className="ml-[5px] shrink-0"><rect width="16" height="14" rx="2" fill="#1b7fd4" /><path d="M2 4h12M2 7h12M4 10h8" stroke="#fff" strokeDasharray="2 1" /></svg>
        <svg width="16" height="16" viewBox="0 0 16 16" className="ml-[7px] shrink-0"><circle cx="6" cy="4" r="3" fill="#b8c4cc" /><path d="M0 13c0-5 10-5 10 0z" fill="#b8c4cc" /><rect x="7.500" y="9.500" width="8" height="6" fill="#fff" stroke="#b8c4cc" /></svg>
        <svg width="15" height="15" viewBox="0 0 15 15" className="ml-[4px] shrink-0"><path d="M5 1L0 4l2 3 1-1v8h9V6l1 1 2-3-5-3c-1 2-4 2-5 0z" fill="#1b7fd4" /></svg>
        <svg width="15" height="15" viewBox="0 0 15 15" className="ml-[7px] shrink-0"><path d="M14 3l-3 3-2-1-1-2 3-3C7-1 4 2 5 6L0 12l3 3 6-5c4 1 6-3 5-7z" fill="#1b7fd4" /></svg>
      </div>
    </div>
  );
}
